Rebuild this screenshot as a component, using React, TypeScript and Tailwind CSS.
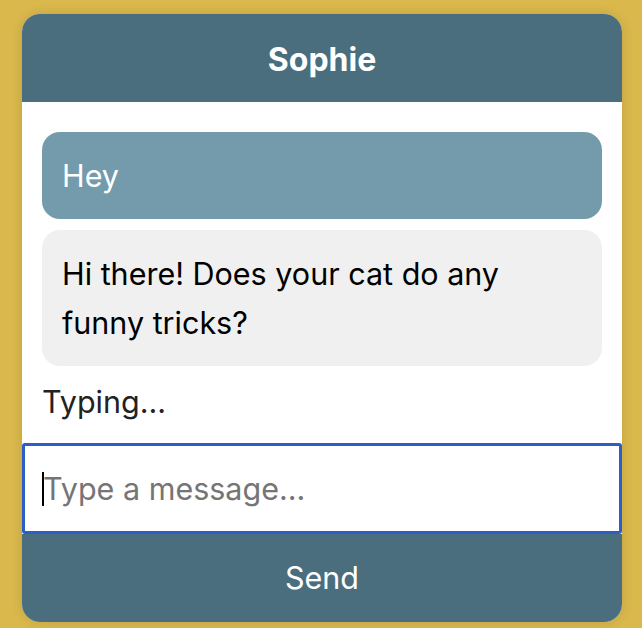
import React from "react";

export default function App() {
  return (
    <div
      className="min-h-screen w-full bg-[#dab84c] pt-[14px]"
      style={{ fontFamily: "Inter, 'Noto Sans', sans-serif" }}
    >
      <div className="ml-[22px] flex w-[600px] flex-col overflow-hidden rounded-[18px] bg-white shadow-[0_0_12px_rgba(0,0,0,0.12)]">
        <div className="flex h-[88px] items-center justify-center bg-[#4a6e7d] pt-[3px]">
          <h1 className="text-[32px] font-bold text-white">Sophie</h1>
        </div>
        <div className="flex flex-col gap-[11px] px-5 pb-[17px] pt-[30px]">
          <div className="rounded-[18px] bg-[#749bab] px-5 py-[19px] text-[30.5px] leading-[49px] text-white">
            Hey
          </div>
          <div className="rounded-[18px] bg-[#f0f0f0] px-5 py-[19px] text-[30.5px] leading-[49px] text-black">
            Hi there! Does your cat do any funny tricks?
          </div>
          <div className="text-[30.5px] leading-[49px] text-[#222]">Typing...</div>
        </div>
        <div className="relative">
          <input
            type="text"
            placeholder="Type a message..."
            className="block h-[91px] w-full rounded-[3px] border-[3px] border-[#2b5fc7] bg-white px-[18px] text-[30.5px] text-black outline-none placeholder:text-[#757575]"
          />
          <span className="pointer-events-none absolute left-[20px] top-[29px] h-[34px] w-[2px] bg-black" />
        </div>
        <button className="flex h-[88px] w-full items-center justify-center bg-[#4a6e7d] text-[30.5px] text-white">
          Send
        </button>
      </div>
    </div>
  );
}
